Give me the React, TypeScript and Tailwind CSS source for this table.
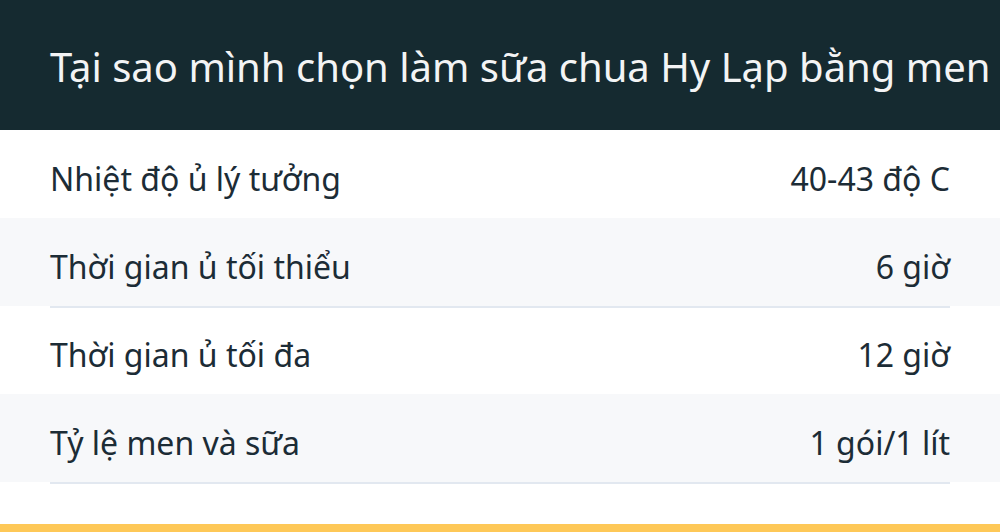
import React from "react";

const rows = [
  { k: "Nhiệt độ ủ lý tưởng", v: "40-43 độ C" },
  { k: "Thời gian ủ tối thiểu", v: "6 giờ" },
  { k: "Thời gian ủ tối đa", v: "12 giờ" },
  { k: "Tỷ lệ men và sữa", v: "1 gói/1 lít" },
];

export default function App() {
  return (
    <div className="w-[1000px] h-[532px] overflow-hidden bg-white flex flex-col" style={{ fontFamily: '"Noto Sans", sans-serif' }}>
      <div className="h-[130px] bg-[#152a30] flex items-center px-[50px] pt-[4px] shrink-0 overflow-hidden">
        <h1 className="text-[40px] leading-none text-[#f3f4f5] whitespace-nowrap font-normal">
          Tại sao mình chọn làm sữa chua Hy Lạp bằng men
        </h1>
      </div>
      {rows.map((r, i) => (
        <React.Fragment key={i}>
          <div className={i % 2 === 1 ? "bg-[#f7f8fa] h-[88px] shrink-0" : "bg-white h-[88px] shrink-0"}>
            <div className="mx-[50px] h-full flex items-center justify-between pt-[10px]">
              <span className="text-[32px] text-[#1c2c36]">{r.k}</span>
              <span className="text-[32px] text-[#1c2c36]">{r.v}</span>
            </div>
          </div>
          {i % 2 === 1 && <div className="relative h-[2px] -mb-[2px] mx-[50px] bg-[#e2e8f0] shrink-0" />}
        </React.Fragment>
      ))}
      <div className="flex-1" />
      <div className="h-[8px] bg-[#fec857] shrink-0" />
    </div>
  );
}
